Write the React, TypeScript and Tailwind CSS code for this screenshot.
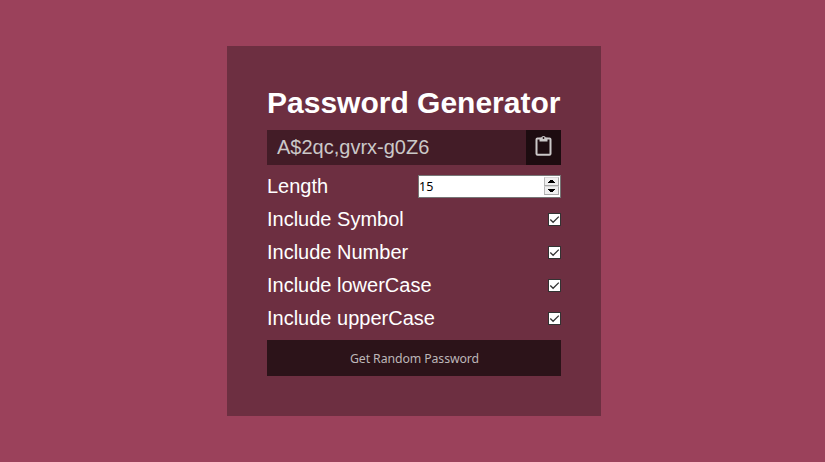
import { useState } from "react";

const options = ["Include Symbol", "Include Number", "Include lowerCase", "Include upperCase"];

function ClipboardIcon() {
  return (
    <svg width="17" height="21" viewBox="0 0 17 21" fill="none" aria-hidden="true">
      <rect x="1.5" y="3.5" width="14" height="16.3" rx="1" stroke="#cbc8c8" strokeWidth="2" />
      <path d="M4.5 2.8h1.6a2.5 2.5 0 0 1 4.8 0h1.6v3.7h-8z" fill="#cbc8c8" />
      <circle cx="8.5" cy="3" r="0.9" fill="#1d0c10" />
    </svg>
  );
}

function LengthInput() {
  return (
    <div className="flex h-[23px] w-[143px] justify-between border border-[#767676] bg-white">
      <input
        defaultValue="15"
        className="h-[21px] w-[100px] bg-transparent text-[12.5px] text-black outline-none [font-family:'Noto_Sans',sans-serif]"
      />
      <div className="mt-px mr-px flex h-[18px] w-[15px] flex-col">
        {["M5 5h7v-1h-1v-1h-1v-1h-3v1h-1v1h-1z", "M5 2h7v1h-1v1h-1v1h-3v-1h-1v-1h-1z"].map((d) => (
          <button
            key={d}
            type="button"
            className="h-[9px] w-[15px] border border-t-[#d8d8d8] border-r-[#a8a8a8] border-b-[#a8a8a8] border-l-[#b8b8b8] bg-[#f0f0f0]"
          >
            <svg className="block" width="13" height="7" viewBox="2 0 13 7" shapeRendering="crispEdges">
              <path d={d} fill="#000" />
            </svg>
          </button>
        ))}
      </div>
    </div>
  );
}

function Checkbox({ label }: { label: string }) {
  const [checked, setChecked] = useState(true);
  return (
    <button
      type="button"
      role="checkbox"
      aria-checked={checked}
      aria-label={label}
      onClick={() => setChecked(!checked)}
      className="flex size-[13px] items-center justify-center border border-[#333] bg-white"
    >
      {checked && (
        <svg width="11" height="11" viewBox="0 0 11 11" fill="none">
          <path d="M1.3 5.5 4.1 8.3 9.8 2.6" stroke="#333" strokeWidth="1.3" />
        </svg>
      )}
    </button>
  );
}

export default function App() {
  return (
    <main className="flex h-[462px] w-[825px] items-center justify-center bg-[#9b415b] pl-[3px] [font-family:'Liberation_Sans',Arial,sans-serif]">
      <section className="flex h-[370px] w-[374px] flex-col gap-[10px] bg-[#6d2f41] p-10 text-[20px] leading-[23px] text-white">
        <h2 className="h-[34px] text-[30px] leading-[34px] font-bold whitespace-nowrap">Password Generator</h2>
        <div className="flex h-[35px] items-center justify-between bg-[#431c27] pl-[10px]">
          <span className="text-[#cbc8c8]">A$2qc,gvrx-g0Z6</span>
          <button type="button" aria-label="Copy" className="flex size-[35px] items-center justify-center bg-[#1d0c10] pb-[4px]">
            <ClipboardIcon />
          </button>
        </div>
        <div className="flex h-[23px] justify-between">
          <span>Length</span>
          <LengthInput />
        </div>
        {options.map((label) => (
          <div key={label} className="flex h-[23px] items-center justify-between">
            <span>{label}</span>
            <Checkbox label={label} />
          </div>
        ))}
        <button
          type="button"
          className="h-9 bg-[#2c1319] pt-[2px] pl-px text-[12.3px] leading-4 tracking-[-0.1px] whitespace-nowrap text-[#bdb6b8] [font-family:'Noto_Sans',sans-serif]"
        >
          Get Random Password
        </button>
      </section>
    </main>
  );
}
